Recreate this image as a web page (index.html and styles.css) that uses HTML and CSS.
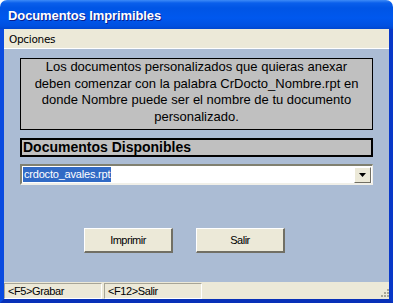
FILE: index.html
```html
<!DOCTYPE html>
<html>
<head>
<meta charset="utf-8">
<link rel="stylesheet" href="styles.css">
</head>
<body>
<div class="window">
  <div class="titlebar"><span class="title">Documentos Imprimibles</span></div>
  <div class="frame">
    <div class="menubar"><span class="menu-item">Opciones</span></div>
    <div class="client">
      <div class="info">Los documentos personalizados que quieras anexar<br>deben comenzar con la palabra CrDocto_Nombre.rpt en<br>donde Nombre puede ser el nombre de tu documento<br>personalizado.</div>
      <div class="header">Documentos Disponibles</div>
      <div class="combo">
        <span class="combo-text"><span class="sel">crdocto_avales.rpt</span></span>
        <span class="combo-btn"><svg width="7" height="4" viewBox="0 0 7 4"><path d="M0 0h7L3.5 4z" fill="#000"/></svg></span>
      </div>
      <div class="buttons">
        <div class="btn">Imprimir</div>
        <div class="btn">Salir</div>
      </div>
    </div>
    <div class="statusbar">
      <div class="panel p1">&lt;F5&gt;Grabar</div>
      <div class="panel p2">&lt;F12&gt;Salir</div>
      <div class="grip"><svg width="12" height="12" viewBox="0 0 12 12"><g fill="#A7A597"><rect x="10" y="2" width="2" height="2"/><rect x="7" y="5" width="2" height="2"/><rect x="10" y="5" width="2" height="2"/><rect x="4" y="8" width="2" height="2"/><rect x="7" y="8" width="2" height="2"/><rect x="10" y="8" width="2" height="2"/></g></svg></div>
    </div>
  </div>
</div>
</body>
</html>
```
FILE: styles.css
```css
html, body { margin: 0; padding: 0; background: #fff; }
.window {
  width: 393px; height: 303px;
  display: flex; flex-direction: column;
  font-family: "Liberation Sans", Arial, sans-serif;
}
.titlebar {
  height: 29px; flex: none;
  background: linear-gradient(to bottom, #3D8BF7 0px, #0A5FEB 3px, #0055E5 8px, #0058EE 18px, #0050E0 26px, #0046CF 29px);
  border-radius: 7px 7px 0 0;
  display: flex; align-items: center;
  padding-left: 8px;
}
.title {
  color: #fff; font-weight: bold; font-size: 13px;
  font-family: "Liberation Sans", Arial, sans-serif;
  letter-spacing: -0.1px;
  text-shadow: 1px 1px 0 #0A1E8C;
  margin-top: 1px;
}
.frame {
  flex: 1; display: flex; flex-direction: column;
  border: 4px solid #0843D8; border-top: 0;
  border-left-color: #0A4BE0; border-right-color: #0838C8; border-bottom-color: #0831B8;
}
.menubar {
  height: 19px; flex: none; background: #ECE9D8;
  border-bottom: 1px solid #fff;
  display: flex; align-items: center;
  color: #000;
}
.menu-item { padding-left: 5px; font-family: "DejaVu Sans", sans-serif; font-size: 10.5px; letter-spacing: -0.3px; }
.client {
  flex: 1; background: #ABBCD4;
  padding: 9px 16px 0 16px;
  display: flex; flex-direction: column;
}
.info {
  background: #C0C0C0; border: 1px solid #000;
  height: 70px; box-sizing: content-box;
  text-align: center; font-size: 13px; line-height: 16.6px;
  padding: 0 2px;
  color: #000;
  white-space: nowrap;
}
.header {
  margin-top: 8px; background: #C0C0C0; border: 2px solid #000;
  height: 15px; font-weight: bold; font-size: 14px; line-height: 15px;
  padding-left: 1px; color: #000;
}
.combo {
  margin-top: 7px; height: 17px; background: #fff;
  border-top: 2px solid #808070; border-left: 2px solid #808070;
  border-right: 1px solid #F0EFE8; border-bottom: 2px solid #F0EFE8;
  display: flex; align-items: center; justify-content: space-between;
}
.combo-text { font-size: 11px; padding-left: 1px; letter-spacing: -0.2px; }
.sel { background: #316AC5; color: #fff; padding: 0 1px; line-height: 15px; display: inline-block; }
.combo-btn {
  width: 15px; height: 14px; background: #ECE9D8;
  border-top: 1px solid #fff; border-left: 1px solid #fff;
  border-right: 1px solid #716F64; border-bottom: 1px solid #716F64;
  display: flex; align-items: center; justify-content: center;
  margin-right: 1px;
}
.buttons { margin-top: 43px; padding-left: 64px; display: flex; gap: 23px; }
.btn {
  width: 86px; height: 22px; background: #ECE9D8;
  border-top: 1px solid #fff; border-left: 1px solid #fff;
  border-right: 2px solid #716F64; border-bottom: 2px solid #716F64;
  display: flex; align-items: center; justify-content: center;
  font-size: 11px; color: #000; letter-spacing: -0.5px;
}
.statusbar {
  height: 17px; flex: none; background: #ECE9D8;
  display: flex; align-items: stretch;
  font-size: 11px; letter-spacing: -0.4px;
  position: relative;
}
.panel {
  border: 1px solid #A7A597; border-right-color: #fff; border-bottom-color: #fff;
  display: flex; align-items: center; padding-left: 3px;
  margin-top: 1px;
}
.p1 { width: 93px; }
.p2 { width: 93px; margin-left: 2px; }
.grip { position: absolute; right: 0; bottom: 0; width: 12px; height: 12px; }
```
